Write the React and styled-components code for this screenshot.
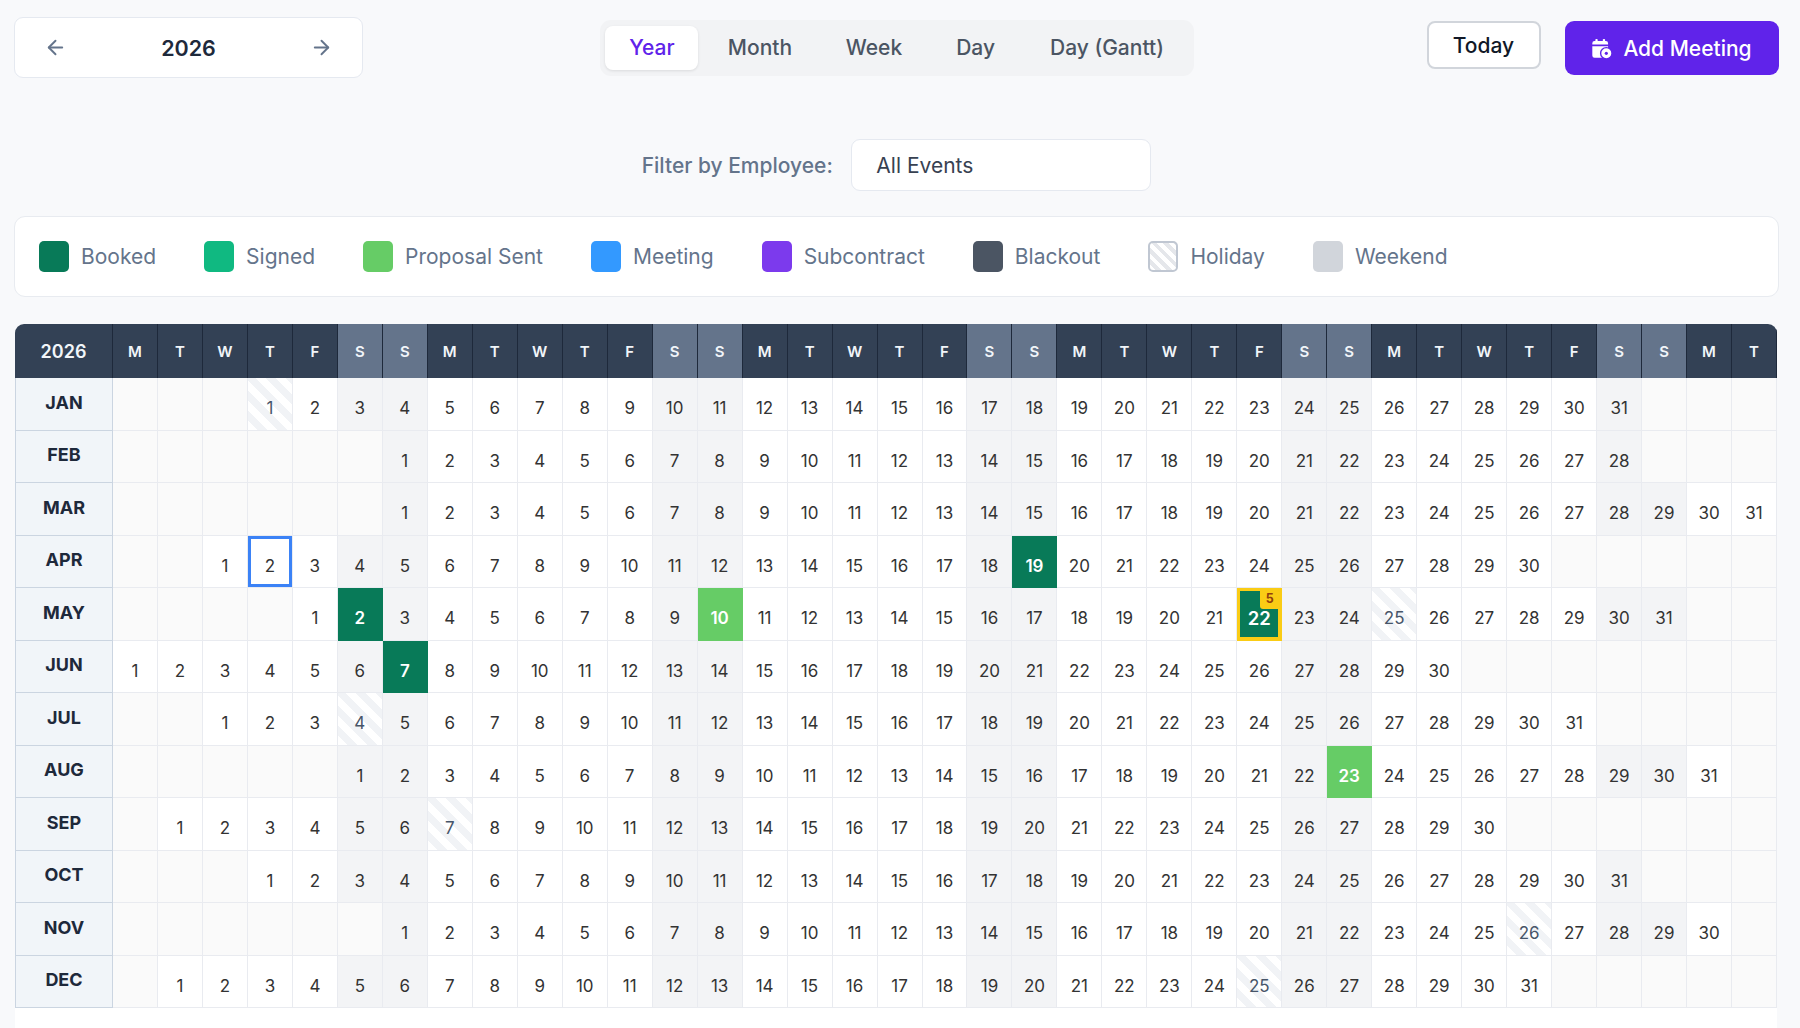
import React from 'react';
import styled, { createGlobalStyle, css } from 'styled-components';
import { ArrowLeft, ArrowRight } from 'lucide-react';

const Global = createGlobalStyle`
  html, body { margin: 0; padding: 0; background: #f8f9fb; }
  body { font-family: Inter, "Liberation Sans", sans-serif; height: 1028px; overflow: hidden; }
  * { box-sizing: border-box; }
`;

const Page = styled.div`
  padding: 17px 21.5px 0 14px;
  width: 1800px;
  height: 1028px;
  display: flex;
  flex-direction: column;
`;

const TopBar = styled.div`
  display: grid;
  grid-template-columns: 1fr auto 1fr;
  align-items: start;
`;

const YearNav = styled.div`
  justify-self: start;
  width: 349px;
  height: 61px;
  background: #fff;
  border: 1.5px solid #e5e9f0;
  border-radius: 9px;
  display: flex;
  align-items: center;
  justify-content: space-between;
  padding: 0 29px;
  color: #64748b;
`;

const YearLabel = styled.span`
  font-size: 21.5px;
  font-weight: 600;
  color: #1e293b;
`;

const Tabs = styled.div`
  margin: 3px 0 0 2px;
  height: 56px;
  width: 594px;
  background: #f2f3f5;
  border-radius: 11px;
  padding: 5.5px 5px;
  display: flex;
  gap: 0;
`;

const Tab = styled.div`
  height: 44px;
  display: flex;
  align-items: center;
  justify-content: center;
  font-size: 21px;
  font-weight: 500;
  width: ${p => p.$w}px;
  color: ${p => (p.$active ? '#6023ea' : '#4b5563')};
  ${p => p.$active && css`
    background: #fff;
    border-radius: 8px;
    box-shadow: 0 1px 3px rgba(0, 0, 0, 0.1);
  `}
`;

const Actions = styled.div`
  justify-self: end;
  margin-top: 4px;
  display: flex;
  gap: 24px;
  align-items: flex-start;
`;

const TodayButton = styled.div`
  width: 114px;
  height: 48px;
  background: #fff;
  border: 2px solid #d1d5db;
  border-radius: 8px;
  display: flex;
  align-items: center;
  justify-content: center;
  font-size: 21px;
  font-weight: 500;
  color: #111827;
`;

const AddButton = styled.div`
  width: 214px;
  height: 54px;
  background: #6023ea;
  border-radius: 9px;
  display: flex;
  align-items: center;
  justify-content: center;
  gap: 11px;
  font-size: 21px;
  font-weight: 500;
  color: #fff;
`;

const FilterRow = styled.div`
  margin-top: 61px;
  display: flex;
  justify-content: center;
  align-items: center;
  gap: 18px;
  padding-right: 0;
`;

const FilterLabel = styled.span`
  font-size: 21px;
  font-weight: 500;
  color: #64748b;
`;

const Select = styled.div`
  width: 300px;
  height: 52px;
  background: #fff;
  border: 1.5px solid #e5e9f0;
  border-radius: 9px;
  display: flex;
  align-items: center;
  padding-left: 24.5px;
  font-size: 21px;
  color: #374151;
`;

const Legend = styled.div`
  margin-top: 25px;
  height: 81px;
  background: #fff;
  border: 1.5px solid #e8ebf0;
  border-radius: 11px;
  display: flex;
  align-items: center;
  gap: 48px;
  padding: 0 24px;
`;

const LegendItem = styled.div`
  display: flex;
  align-items: center;
  gap: 12px;
  font-size: 21px;
  color: #64748b;
`;

const Swatch = styled.span`
  width: 30px;
  height: 31px;
  border-radius: 5px;
  background: ${p => p.$bg};
  ${p => p.$hatch && css`
    background: repeating-linear-gradient(45deg, #fff, #fff 4px, #e5e7eb 4px, #e5e7eb 8px);
    border: 2px solid #c0c7d2;
  `}
`;

const TableWrap = styled.div`
  margin: 27px 1.5px 0 1px;
  flex: 1;
  background: #fff;
  border-radius: 9px 9px 0 0;
  overflow: hidden;
`;

const Grid = styled.div`
  display: grid;
  grid-template-columns: 98px repeat(37, 1fr);
  grid-auto-rows: 52.5px;
  grid-template-rows: 54px;
`;

const Head = styled.div`
  display: flex;
  align-items: center;
  justify-content: center;
  background: ${p => (p.$weekend ? '#64748b' : '#334155')};
  border-right: 1.5px solid #1e293b;
  color: #f1f5f9;
  font-weight: 600;
  font-size: ${p => (p.$corner ? '18px' : '15px')};
`;

const Month = styled.div`
  display: flex;
  align-items: center;
  justify-content: center;
  padding-bottom: 3px;
  background: #f1f5f9;
  border: solid #cbd5e1;
  border-width: 0 1.5px 1.5px 1.5px;
  color: #1e293b;
  font-weight: 700;
  font-size: 18px;
`;

const hatch = css`
  background: repeating-linear-gradient(45deg, #fff, #fff 7px, #f1f3f6 7px, #f1f3f6 14px);
  color: #475569;
`;

const Cell = styled.div`
  position: relative;
  display: flex;
  align-items: center;
  justify-content: center;
  padding-top: 9px;
  font-size: 17px;
  color: #333;
  border: solid #e9ebf0;
  border-width: 0 1.5px 1.5px 0;
  background: #fff;
  ${p => p.$empty && css`background: #fafafa;`}
  ${p => p.$weekend && css`background: #f3f4f6;`}
  ${p => p.$holiday && hatch}
  ${p => p.$fill && css`
    background: ${p.$fill};
    color: #fff;
    font-weight: 600;
    border-color: ${p.$fill};
  `}
  ${p => p.$today && css`
    background: #fff;
    box-shadow: inset 0 0 0 3px #3b82f6;
  `}
  ${p => p.$flag && css`
    background: #087a58;
    color: #fff;
    font-weight: 600;
    font-size: 18.5px;
    border-color: #facc15;
    box-shadow: inset 0 0 0 3px #facc15;
  `}
`;

const Badge = styled.span`
  position: absolute;
  top: 0;
  right: 0;
  width: 21px;
  height: 21px;
  padding-right: 2px;
  background: #facc15;
  border-radius: 0 0 0 3px;
  color: #92400e;
  font-size: 12.5px;
  font-weight: 700;
  display: flex;
  align-items: center;
  justify-content: center;
`;

const BOOKED = '#087a58';
const PROPOSAL = '#66cc66';

const LEGEND = [
  ['Booked', BOOKED], ['Signed', '#10b981'], ['Proposal Sent', '#66cc66'], ['Meeting', '#3399ff'],
  ['Subcontract', '#7c3aed'], ['Blackout', '#4b5563'], ['Holiday', null], ['Weekend', '#d1d5db'],
];
const MONTHS = ['JAN','FEB','MAR','APR','MAY','JUN','JUL','AUG','SEP','OCT','NOV','DEC'];
const DAYS = 'MTWTFSS';
const HOLIDAYS = { '0-1': 1, '4-25': 1, '6-4': 1, '8-7': 1, '10-26': 1, '11-25': 1 };
const FILLS = { '3-19': BOOKED, '4-2': BOOKED, '5-7': BOOKED, '4-10': PROPOSAL, '7-23': PROPOSAL };

const CalendarClock = () => (
  <svg width="21" height="21" viewBox="0 0 24 24" fill="#fff">
    <rect x="5" y="1" width="2.6" height="4" rx="1" />
    <rect x="13.5" y="1" width="2.6" height="4" rx="1" />
    <path d="M1.5 6a2.5 2.5 0 0 1 2.5-2.5h13a2.5 2.5 0 0 1 2.5 2.5v1.5h-18zM1.5 9.5h18V22.5H4a2.5 2.5 0 0 1-2.5-2.5z" />
    <circle cx="17.5" cy="17.5" r="6.5" stroke="#6023ea" strokeWidth="1.6" />
    <circle cx="17.5" cy="17.5" r="1.8" fill="#6023ea" />
  </svg>
);

const monthCells = (m) => {
  const offset = (new Date(2026, m, 1).getDay() + 6) % 7;
  const count = new Date(2026, m + 1, 0).getDate();
  return Array.from({ length: 37 }, (_, col) => {
    const day = col - offset + 1;
    const key = `${m}-${col}`;
    if (day < 1 || day > count) return <Cell key={key} $empty />;
    const id = `${m}-${day}`;
    const flag = id === '4-22';
    return (
      <Cell
        key={key}
        $weekend={col % 7 > 4}
        $holiday={HOLIDAYS[id]}
        $fill={FILLS[id]}
        $today={id === '3-2'}
        $flag={flag}
      >
        {flag && <Badge>5</Badge>}
        {day}
      </Cell>
    );
  });
};

export default function App() {
  return (
    <>
      <Global />
      <Page>
        <TopBar>
          <YearNav>
            <ArrowLeft size={23} strokeWidth={2} />
            <YearLabel>2026</YearLabel>
            <ArrowRight size={23} strokeWidth={2} />
          </YearNav>
          <Tabs>
            <Tab $active $w={94}>Year</Tab>
            <Tab $w={124}>Month</Tab>
            <Tab $w={106}>Week</Tab>
            <Tab $w={99}>Day</Tab>
            <Tab $w={166}>Day (Gantt)</Tab>
          </Tabs>
          <Actions>
            <TodayButton>Today</TodayButton>
            <AddButton><CalendarClock />Add Meeting</AddButton>
          </Actions>
        </TopBar>
        <FilterRow>
          <FilterLabel>Filter by Employee:</FilterLabel>
          <Select>All Events</Select>
        </FilterRow>
        <Legend>
          {LEGEND.map(([label, color]) => (
            <LegendItem key={label}>
              <Swatch $bg={color} $hatch={!color} />
              {label}
            </LegendItem>
          ))}
        </Legend>
        <TableWrap>
          <Grid>
            <Head $corner>2026</Head>
            {Array.from({ length: 37 }, (_, i) => (
              <Head key={i} $weekend={i % 7 > 4}>{DAYS[i % 7]}</Head>
            ))}
            {MONTHS.map((name, m) => (
              <React.Fragment key={name}>
                <Month>{name}</Month>
                {monthCells(m)}
              </React.Fragment>
            ))}
          </Grid>
        </TableWrap>
      </Page>
    </>
  );
}
